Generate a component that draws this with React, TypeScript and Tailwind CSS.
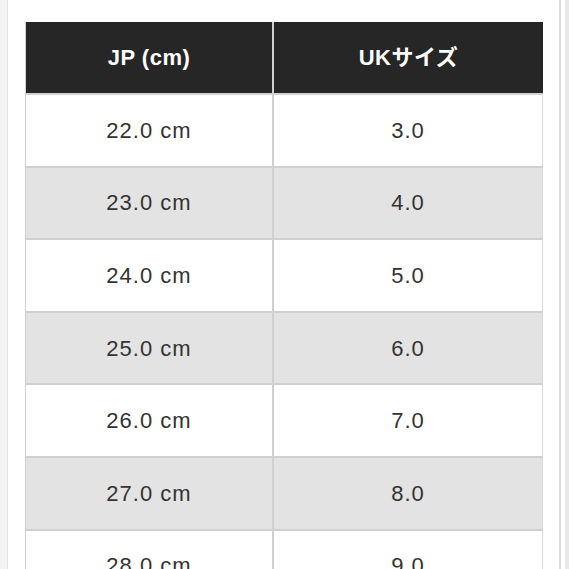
import React from "react";

const rows = [
  ["22.0 cm", "3.0"],
  ["23.0 cm", "4.0"],
  ["24.0 cm", "5.0"],
  ["25.0 cm", "6.0"],
  ["26.0 cm", "7.0"],
  ["27.0 cm", "8.0"],
  ["28.0 cm", "9.0"],
];

export default function App() {
  return (
    <div
      className="flex h-[569px] w-[569px] overflow-hidden bg-white"
      style={{ fontFamily: '"Liberation Sans", "Noto Sans CJK JP", Arial, sans-serif' }}
    >
      <div className="w-[8px] shrink-0 border-r border-[#e4e4e4] bg-[#f3f3f3]" />
      <div className="flex-1 pl-[17px] pt-[22px]">
        <div className="w-[518px] border-l border-[#cfcfcf]">
          <div className="flex h-[71px] bg-[#262626] text-[22px] font-bold tracking-[0.5px] text-white">
            <div className="flex w-[248px] items-center justify-center border-r-2 border-[#d0d0d0]">JP (cm)</div>
            <div className="flex flex-1 items-center justify-center">UKサイズ</div>
          </div>
          {rows.map(([a, b], i) => (
            <div
              key={i}
              className={`flex h-[72.6px] border-t-2 border-[#d0d0d0] text-[22px] tracking-[1px] text-[#333333] ${
                i % 2 === 1 ? "bg-[#e3e3e3]" : "bg-white"
              }`}
            >
              <div className="flex w-[248px] items-center justify-center border-r-2 border-[#d0d0d0]">{a}</div>
              <div className="flex flex-1 items-center justify-center border-r border-[#d8d8d8]">{b}</div>
            </div>
          ))}
        </div>
      </div>
      <div className="w-[6px] shrink-0 border-l-2 border-[#dcdcdc] bg-white" />
      <div className="w-[4px] shrink-0 bg-[#e8e8e8]" />
    </div>
  );
}
